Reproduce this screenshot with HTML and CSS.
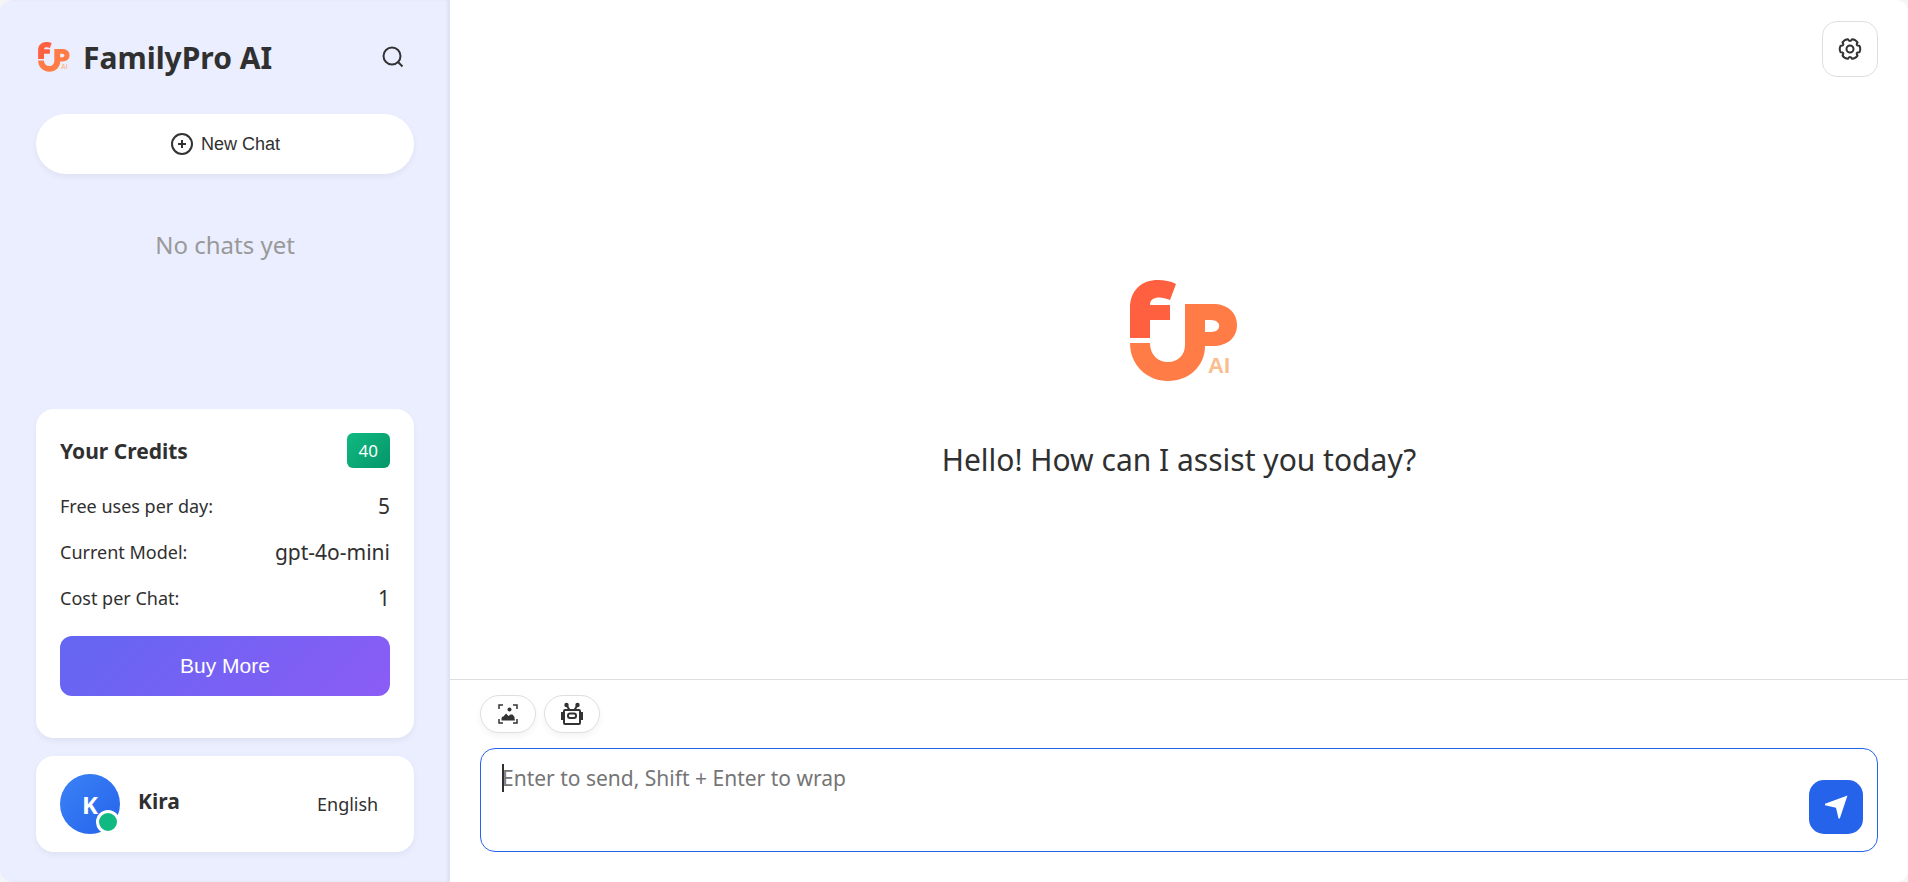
FILE: index.html
```html
<!DOCTYPE html>
<html lang="en">

<head>
  <meta charset="UTF-8">
  <title>FamilyPro AI</title>
  <link rel="stylesheet" href="styles.css">
</head>

<body>

  <svg class="sprite" aria-hidden="true">
    <symbol id="logo" viewBox="0 0 108 102">
      <path fill="#ff6040" d="M0 58V28C0 10 12 0 28 0c7 0 12 1 18 4l-6 16c-9-4-20-4-20 5h20v15H20v18z" />
      <path fill="#ff7c46" d="M0 63h20c0 12 8 19 18 19s17-7 17-17V24h28c14 0 24 8 24 21s-10 21-24 21h-8c0 20-16 35-37 35S0 85 0 63zM75 40v12h6c11 0 11-12 0-12z" />
      <text x="78" y="93" class="logo-ai">AI</text>
    </symbol>
  </svg>

  <div class="app">
    <aside class="sidebar">
      <header class="brand">
        <svg class="brand-logo"><use href="#logo" /></svg>
        <h1 class="brand-name">FamilyPro AI</h1>
        <button class="search-btn" aria-label="Search">
          <svg width="24" height="24" viewBox="0 0 24 24" fill="none" stroke="#333" stroke-width="2">
            <circle cx="11" cy="11" r="8.5" />
            <path d="M17 17l4.500 4.500" />
          </svg>
        </button>
      </header>

      <button class="new-chat">
        <svg width="24" height="24" viewBox="0 0 24 24" fill="none" stroke="#333" stroke-width="2">
          <circle cx="12" cy="12" r="10" />
          <path d="M12 8v8M8 12h8" />
        </svg>
        New Chat
      </button>

      <p class="empty">No chats yet</p>

      <section class="card credits">
        <div class="credits-head">
          <h2 class="credits-title">Your Credits</h2>
          <span class="badge">40</span>
        </div>
        <dl class="rows">
          <div class="row"><dt>Free uses per day:</dt><dd>5</dd></div>
          <div class="row"><dt>Current Model:</dt><dd>gpt-4o-mini</dd></div>
          <div class="row"><dt>Cost per Chat:</dt><dd>1</dd></div>
        </dl>
        <button class="buy">Buy More</button>
      </section>

      <section class="card user">
        <div class="avatar">K<span class="status"></span></div>
        <span class="user-name">Kira</span>
        <select class="lang" aria-label="Language">
          <option>English</option>
        </select>
      </section>
    </aside>

    <main class="main">
      <div class="topbar">
        <button class="settings" aria-label="Settings">
          <svg width="24" height="24" viewBox="0 0 24 24" fill="none" stroke="#333" stroke-width="2" stroke-linejoin="round">
            <circle cx="12" cy="12" r="3.5" />
            <path d="M10 2.200Q12 6 14 2.200Q17.500 2.500 19.500 5.400Q17.200 9 21.500 8.800Q23 12 21.500 15.200Q17.200 15 19.500 18.600Q17.500 21.500 14 21.800Q12 18 10 21.800Q6.500 21.500 4.500 18.600Q6.800 15 2.500 15.200Q1 12 2.500 8.800Q6.800 9 4.500 5.400Q6.500 2.500 10 2.200z" />
          </svg>
        </button>
      </div>

      <div class="welcome">
        <svg class="welcome-logo"><use href="#logo" /></svg>
        <p class="welcome-text">Hello! How can I assist you today?</p>
      </div>

      <footer class="composer">
        <div class="tools">
          <button class="tool" aria-label="Image">
            <svg width="20" height="20" viewBox="0 0 20 20" fill="#333">
              <path d="M1 5V1h4M15 1h4v4M19 15v4h-4M5 19H1v-4" fill="none" stroke="#333" stroke-width="1.500" />
              <circle cx="11.500" cy="5.500" r="2" />
              <path d="M3.500 16.500v-2.500l1-1.500h1l2.500-3 2.500 2.500 2-1.500h2l2 2.500v1.500l.5 2z" />
            </svg>
          </button>
          <button class="tool" aria-label="Robot">
            <svg width="24" height="24" viewBox="0 0 24 24" fill="none" stroke="#333" stroke-width="2">
              <path d="M6.500 3l3 5M17.500 3l-3 5" />
              <circle cx="6.500" cy="3" r="1.200" fill="#333" />
              <circle cx="17.500" cy="3" r="1.200" fill="#333" />
              <rect x="4" y="8" width="16" height="14" rx="1" />
              <rect x="8" y="11.500" width="8" height="4.500" rx="2" />
              <path d="M4 11H2v6h2M20 11h2v6h-2" />
            </svg>
          </button>
        </div>
        <div class="prompt">
          <span class="caret"></span>
          <textarea class="prompt-input" aria-label="Message" placeholder="Enter to send, Shift + Enter to wrap"></textarea>
          <button class="send" aria-label="Send">
            <svg width="24" height="24" viewBox="0 0 24 24" fill="#fff">
              <path d="M23.500.5L1 8.800v1.400l11 2.500 2.500 10.800h1.300z" />
            </svg>
          </button>
        </div>
      </footer>
    </main>
  </div>

</body>

</html>
```

FILE: styles.css
```css
* {
  box-sizing: border-box;
}

body {
  margin: 0;
  background: #f5f5f5;
  color: #303030;
  font-family: "Noto Sans", sans-serif;
  font-size: 21px;
}

h1, h2, p, dl, dd {
  margin: 0;
}

button {
  border: none;
  padding: 0;
  background: none;
  color: inherit;
  font-family: "Liberation Sans", Arial, sans-serif;
  cursor: pointer;
  display: flex;
  align-items: center;
  justify-content: center;
}

.sprite {
  display: none;
}

.logo-ai {
  fill: #f9bd8e;
  font-family: "Liberation Sans", Arial, sans-serif;
  font-size: 22px;
  font-weight: bold;
}

.app {
  display: flex;
  min-height: 100vh;
  background: #fff;
  border-radius: 12px;
  overflow: hidden;
}

/* sidebar */

.sidebar {
  width: 450px;
  flex-shrink: 0;
  display: flex;
  flex-direction: column;
  padding: 36px 36px 30px;
  background: #ebeeff;
  box-shadow: inset -3px 0 3px 0 rgba(0, 0, 0, 0.05);
}

.brand {
  display: flex;
  align-items: center;
  height: 42px;
}

.brand-logo {
  width: 32px;
  height: 30px;
  margin: 0 13px 0 2px;
}

.brand-name {
  flex: 1;
  font-size: 30px;
  line-height: 44px;
  padding-top: 2px;
}

.search-btn {
  width: 42px;
  height: 42px;
}

.new-chat {
  gap: 7px;
  height: 60px;
  margin-top: 36px;
  border-radius: 30px;
  background: #fff;
  font-size: 18px;
  box-shadow: 0 3px 6px rgba(0, 0, 0, 0.05);
}

.empty {
  flex: 1;
  padding-top: 53px;
  color: #999;
  font-size: 24px;
  line-height: 36px;
  text-align: center;
}

.card {
  background: #fff;
  border-radius: 18px;
  box-shadow: 0 3px 6px rgba(0, 0, 0, 0.05);
}

.credits {
  padding: 24px 24px 42px;
}

.credits-head {
  display: flex;
  align-items: center;
  justify-content: space-between;
}

.credits-title {
  padding-top: 2px;
  font-size: 21px;
  line-height: 33px;
}

.badge {
  padding: 0 12px;
  border-radius: 6px;
  background: linear-gradient(135deg, #10b981, #059669);
  color: #fff;
  font-size: 17px;
  line-height: 35px;
}

.rows {
  margin: 15px 0;
}

.row {
  display: flex;
  align-items: center;
  justify-content: space-between;
  line-height: 46px;
}

.row dt {
  font-size: 18px;
}

.buy {
  width: 100%;
  height: 60px;
  border-radius: 12px;
  background: linear-gradient(135deg, #6366f1, #8b5cf6);
  color: #fff;
  font-size: 21px;
}

.user {
  display: flex;
  align-items: center;
  gap: 18px;
  margin-top: 18px;
  padding: 18px 24px;
}

.avatar {
  position: relative;
  width: 60px;
  height: 60px;
  border-radius: 50%;
  background: linear-gradient(135deg, #3b82f6, #2563eb);
  color: #fff;
  font-size: 24px;
  font-weight: bold;
  line-height: 62px;
  text-align: center;
}

.status {
  position: absolute;
  right: 0;
  bottom: 0;
  width: 24px;
  height: 24px;
  border: 3px solid #fff;
  border-radius: 50%;
  background: #10b981;
}

.user-name {
  flex: 1;
  padding-bottom: 6px;
  font-weight: bold;
}

.lang {
  appearance: none;
  border: none;
  padding: 6px 11px;
  background: none;
  color: inherit;
  font-family: inherit;
  font-size: 18px;
}

/* chat area */

.main {
  flex: 1;
  display: flex;
  flex-direction: column;
}

.topbar {
  display: flex;
  justify-content: flex-end;
  padding: 21px 30px 0;
}

.settings {
  width: 56px;
  height: 56px;
  border: 1px solid #dedede;
  border-radius: 15px;
}

.welcome {
  flex: 1;
  display: flex;
  flex-direction: column;
  align-items: center;
  justify-content: center;
  gap: 54px;
  padding-top: 7px;
}

.welcome-logo {
  width: 108px;
  height: 102px;
  margin-left: 10px;
}

.welcome-text {
  font-size: 30px;
  line-height: 48px;
}

.composer {
  padding: 15px 30px 30px;
  border-top: 1px solid #dedede;
}

.tools {
  display: flex;
  gap: 8px;
}

.tool {
  width: 56px;
  height: 38px;
  border: 1px solid #dedede;
  border-radius: 19px;
  box-shadow: 0 3px 6px rgba(0, 0, 0, 0.05);
}

.prompt {
  position: relative;
  display: flex;
  align-items: flex-end;
  height: 104px;
  margin-top: 15px;
  padding: 13px 14px 17px;
  border: 1px solid #2563eb;
  border-radius: 15px;
}

.prompt-input {
  flex: 1;
  align-self: stretch;
  border: none;
  outline: none;
  padding: 0 7px;
  resize: none;
  background: none;
  color: inherit;
  font-family: inherit;
  font-size: 21px;
  line-height: 32px;
}

.prompt-input::placeholder {
  color: #757575;
}

/* text cursor of the message box */
.caret {
  position: absolute;
  left: 21px;
  top: 15px;
  width: 2px;
  height: 28px;
  background: #303030;
}

.send {
  width: 54px;
  height: 54px;
  border-radius: 15px;
  background: #2563eb;
}
```
